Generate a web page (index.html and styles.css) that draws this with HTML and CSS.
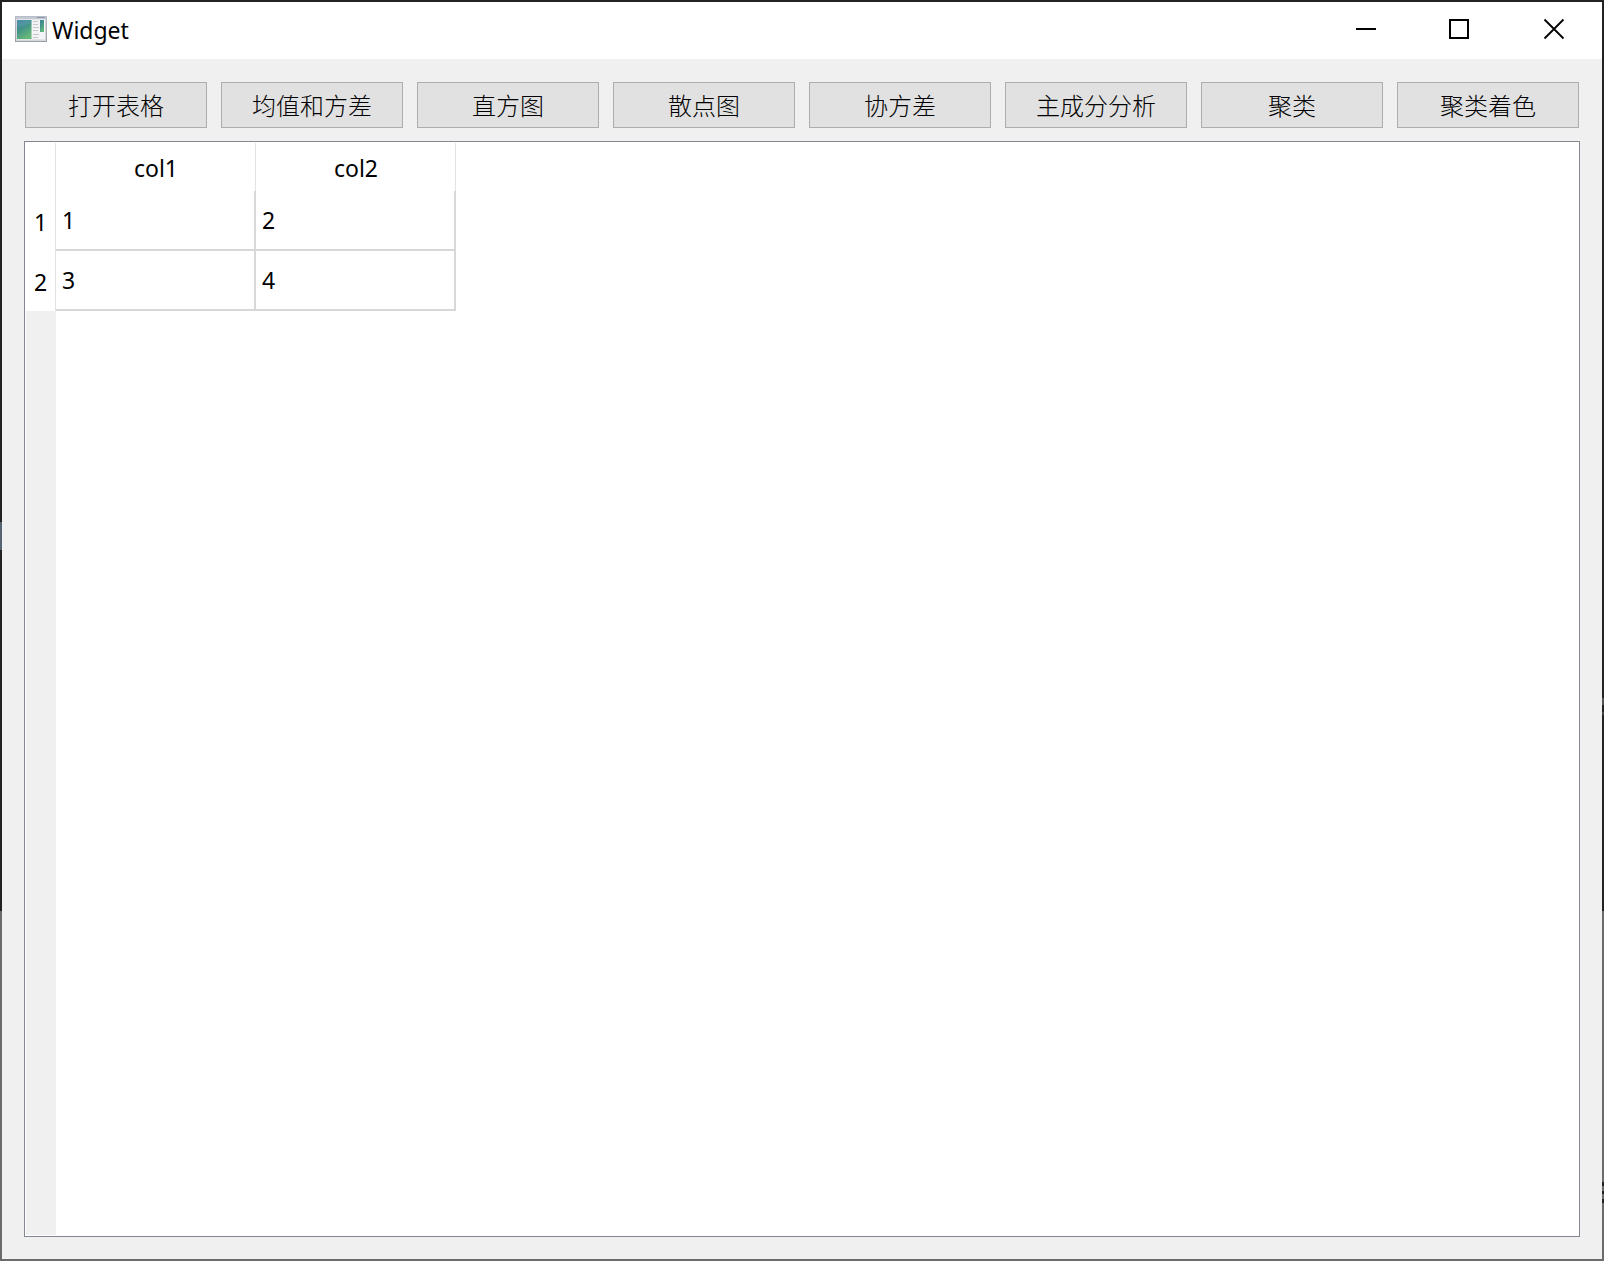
FILE: index.html
```html
<!DOCTYPE html>
<html lang="zh-CN">
<head>
<meta charset="utf-8">
<title>Widget</title>
<link rel="stylesheet" href="styles.css">
</head>
<body>
<div class="window">
  <header class="titlebar">
    <svg class="app-icon" width="32" height="26" viewBox="0 0 32 26">
      <defs>
        <linearGradient id="pane" x1="0" y1="0" x2="0.5" y2="1"><stop offset="0" stop-color="#3d7fa3"/><stop offset="0.5" stop-color="#449488"/><stop offset="1" stop-color="#65b77a"/></linearGradient>
        <linearGradient id="frame" x1="0" y1="0" x2="0" y2="1"><stop offset="0" stop-color="#b6bdc8"/><stop offset="1" stop-color="#9c9fa4"/></linearGradient>
      </defs>
      <rect x="0.5" y="0.5" width="31" height="25" fill="#d3d6da" stroke="url(#frame)"/>
      <path d="M1 2h30" stroke="#c3c9d3" stroke-width="2"/>
      <path d="M22 1.500h8" stroke="#8997ab"/>
      <rect x="2" y="3.500" width="28" height="20" fill="#f3f4f5"/>
      <rect x="2" y="4" width="14.500" height="19" fill="url(#pane)"/>
      <path d="M2 11q8-1 14.500-4v-3H2z" fill="#6ba3bd" opacity=".35"/>
      <path d="M18 5.500h5M18 8.500h5M18 11.500h6M18 14.500h5M18 18.500h6M18 21.500h5" stroke="#c5c8cb"/>
      <rect x="25" y="4" width="4" height="12" fill="url(#pane)"/>
    </svg>
    <h1 class="title">Widget</h1>
    <div class="controls">
      <svg class="minimize" width="20" height="20" viewBox="0 0 20 20"><path d="M0 10h20" class="stroke"/></svg>
      <svg class="maximize" width="20" height="20" viewBox="0 0 20 20"><path d="M1 1h18v18H1z" class="stroke"/></svg>
      <svg class="close" width="20" height="20" viewBox="0 0 20 20"><path d="M.5.5l19 19M19.500.5l-19 19" class="stroke"/></svg>
    </div>
  </header>
  <main class="content">
    <nav class="toolbar">
      <button class="btn">打开表格</button>
      <button class="btn">均值和方差</button>
      <button class="btn">直方图</button>
      <button class="btn">散点图</button>
      <button class="btn">协方差</button>
      <button class="btn">主成分分析</button>
      <button class="btn">聚类</button>
      <button class="btn">聚类着色</button>
    </nav>
    <section class="table-view">
      <div class="grid">
        <div class="head"></div><div class="head">col1</div><div class="head">col2</div>
        <div class="row-head">1</div><div class="cell">1</div><div class="cell">2</div>
        <div class="row-head">2</div><div class="cell">3</div><div class="cell">4</div>
      </div>
      <div class="header-rest"></div>
    </section>
  </main>
</div>
</body>
</html>
```

FILE: styles.css
```css
* { box-sizing: border-box; }
body {
  margin: 0;
  font-family: "Noto Sans", "Noto Sans CJK SC", sans-serif;
  font-size: 23px;
  color: #000;
}
.window {
  height: 1261px;
  padding: 2px;
  display: flex;
  flex-direction: column;
  background:
    linear-gradient(#222 0 2px, transparent 2px),
    linear-gradient(#6b6b6b, #6b6b6b) bottom / 100% 2px no-repeat,
    linear-gradient(#222 0 522px, #566370 522px 550px, #222 550px 911px, #6b6b6b 911px) left / 2px 100% no-repeat,
    linear-gradient(#222 0 698px, #555 698px 705px, #222 705px 712px, #444 712px 715px, #222 715px 911px, #6b6b6b 911px 1182px, #222 1182px 1186px, #6b6b6b 1186px 1191px, #222 1191px 1194px, #6b6b6b 1194px 1199px, #222 1199px 1203px, #6b6b6b 1203px) right / 2px 100% no-repeat;
}
.titlebar {
  height: 57px;
  flex: none;
  display: flex;
  align-items: center;
  padding: 0 38px 0 13px;
  background: #fff;
}
.app-icon { margin-bottom: 3px; }
.title {
  margin: 0 auto 2px 5px;
  font-size: 23px;
  font-weight: 400;
  line-height: 32px;
}
.controls { display: flex; margin-bottom: 3px; }
.controls svg { overflow: visible; }
.maximize { margin: 0 75px 0 73px; }
.stroke { fill: none; stroke: #000; stroke-width: 2; }
.close .stroke { stroke-width: 1.8; }
.content {
  flex: 1;
  display: flex;
  flex-direction: column;
  gap: 13px;
  padding: 23px 22px 22px;
  background: #f0f0f0;
}
.toolbar { display: flex; gap: 14px; padding: 0 1px; }
.btn {
  flex: 1 1 0;
  height: 46px;
  padding: 0;
  border: 1px solid #adadad;
  background: #e1e1e1;
  color: #000;
  font: 300 24px/40px "Noto Sans CJK SC", sans-serif;
  white-space: nowrap;
}
.table-view {
  flex: 1;
  display: flex;
  flex-direction: column;
  padding: 1px;
  border: 1px solid #828790;
  background: #fff;
}
.grid {
  display: grid;
  grid-template-columns: 30px 200px 200px;
  grid-template-rows: 48px 60px 60px;
}
.head, .row-head {
  display: flex;
  align-items: center;
  justify-content: center;
  border-right: 1px solid #e2e2e2;
}
.head { padding: 2px 0 0 1px; }
.row-head { padding-top: 2px; }
.cell {
  display: flex;
  align-items: center;
  padding-left: 6px;
  border-right: 2px solid #d8d8d8;
  border-bottom: 2px solid #d8d8d8;
}
.header-rest { flex: 1; width: 30px; background: #f0f0f0; }
```
